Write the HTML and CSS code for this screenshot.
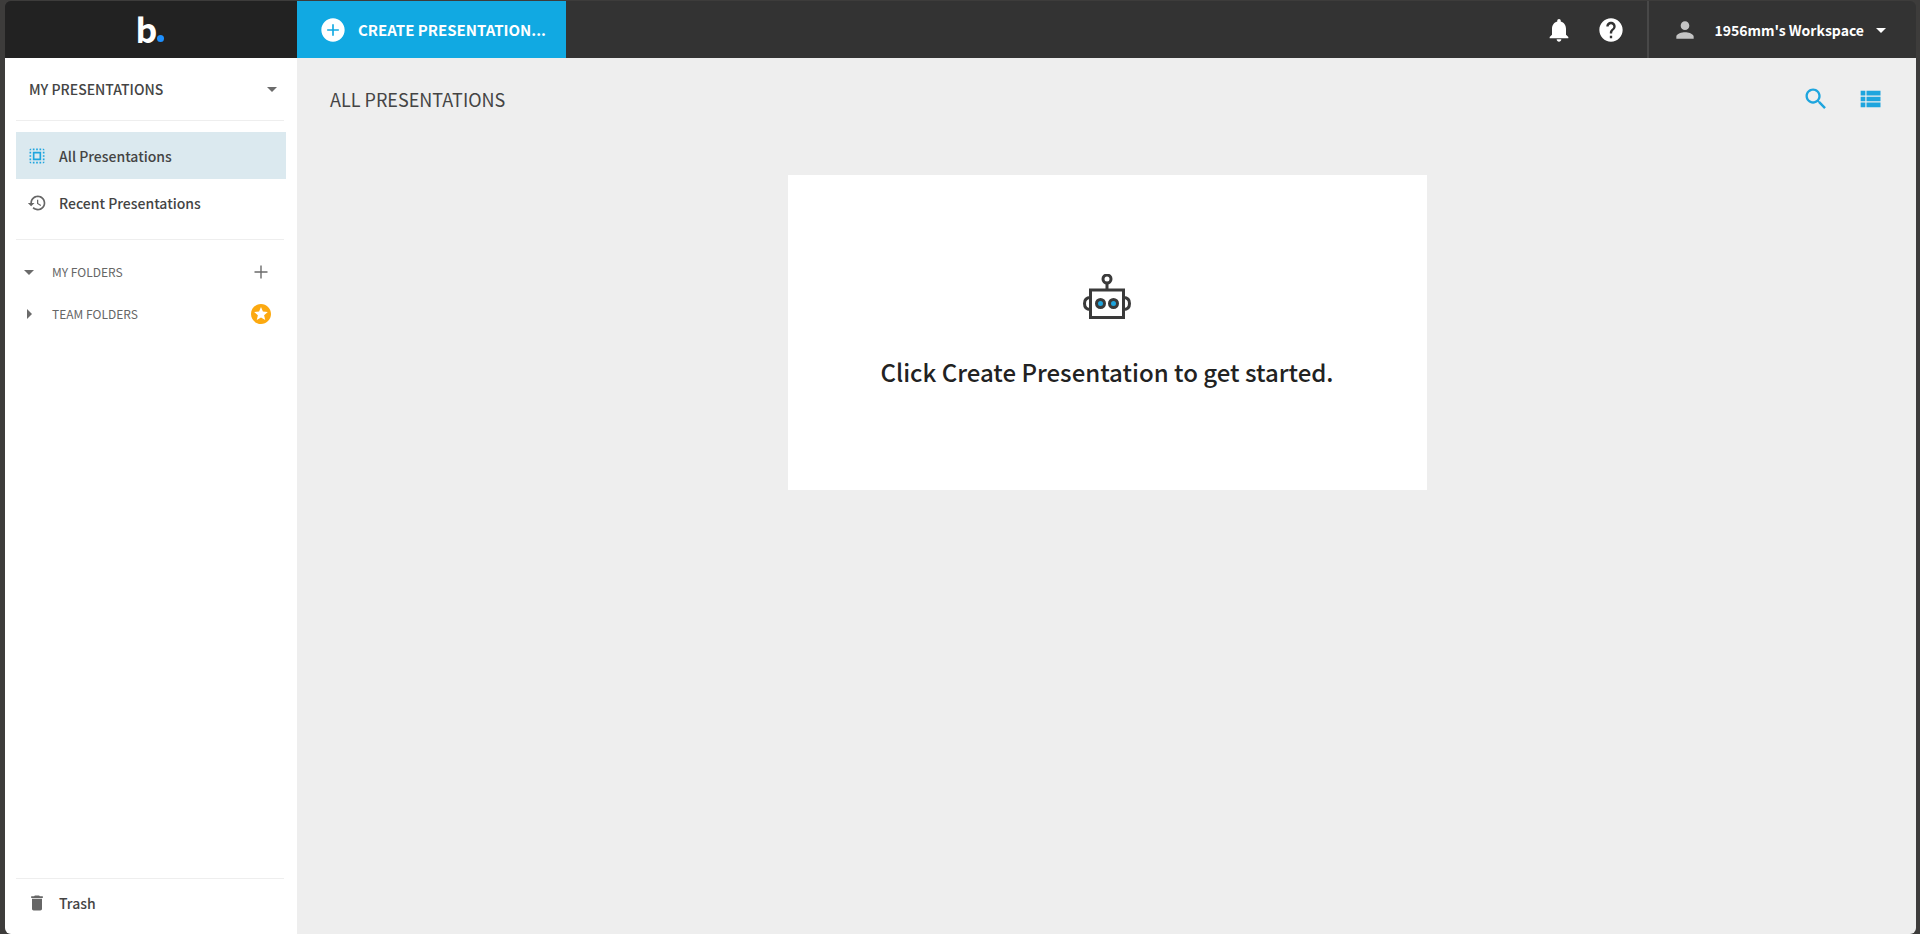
FILE: index.html
```
<!DOCTYPE html>
<html lang="en">
<head>
    <meta charset="UTF-8">
    <meta name="viewport" content="width=device-width, initial-scale=1.0">
    <title>All Presentations</title>
    <link rel="stylesheet" href="styles.css">
</head>
<body>

<div class="app">
    <header class="topbar">
        <a class="logo" href="#" aria-label="Home">b<span class="logo-dot"></span></a>
        <button class="create-btn">
            <svg class="icon-lg" viewBox="0 0 24 24"><path d="M12 2C6.48 2 2 6.48 2 12s4.48 10 10 10 10-4.480 10-10S17.520 2 12 2zm5 10.700h-4.300V17h-1.400v-4.300H7v-1.400h4.300V7h1.400v4.300H17v1.400z"/></svg>
            <span>CREATE PRESENTATION...</span>
        </button>
        <div class="topbar-actions">
            <button class="icon-btn" aria-label="Notifications">
                <svg class="icon-lg" viewBox="0 0 24 24"><path d="M12 22c1.100 0 2-.9 2-2h-4c0 1.100.9 2 2 2zm6-6v-5c0-3.070-1.640-5.640-4.500-6.320V4c0-.83-.67-1.500-1.500-1.500s-1.500.67-1.500 1.500v.68C7.630 5.360 6 7.920 6 11v5l-2 2v1h16v-1l-2-2z"/></svg>
            </button>
            <button class="icon-btn" aria-label="Help">
                <svg class="icon-lg" viewBox="0 0 24 24"><path d="M12 2C6.480 2 2 6.480 2 12s4.480 10 10 10 10-4.480 10-10S17.520 2 12 2zm1 17h-2v-2h2v2zm2.070-7.750l-.9.920C13.450 12.900 13 13.500 13 15h-2v-.5c0-1.100.45-2.100 1.170-2.830l1.240-1.260c.37-.36.59-.86.59-1.410 0-1.100-.9-2-2-2s-2 .9-2 2H8c0-2.210 1.790-4 4-4s4 1.790 4 4c0 .88-.36 1.680-.93 2.250z"/></svg>
            </button>
        </div>
        <button class="workspace">
            <svg class="person" viewBox="0 0 24 24"><path d="M12 12c2.210 0 4-1.790 4-4s-1.790-4-4-4-4 1.790-4 4 1.790 4 4 4zm0 2c-2.670 0-8 1.340-8 4v2h16v-2c0-2.660-5.330-4-8-4z"/></svg>
            <span class="workspace-name">1956mm's Workspace</span>
            <svg class="icon-md" viewBox="0 0 24 24"><path d="M7 10l5 5 5-5z"/></svg>
        </button>
    </header>

    <div class="content">
        <nav class="sidebar">
            <button class="library">
                <span>MY PRESENTATIONS</span>
                <svg class="icon-md" viewBox="0 0 24 24"><path d="M7 10l5 5 5-5z"/></svg>
            </button>

            <div class="links">
                <a class="link active" href="#">
                    <svg class="icon-sm" viewBox="0 0 24 24"><path d="M3 5h2V3c-1.100 0-2 .9-2 2zm0 8h2v-2H3v2zm4 8h2v-2H7v2zM3 9h2V7H3v2zm10-6h-2v2h2V3zm6 0v2h2c0-1.100-.9-2-2-2zM5 21v-2H3c0 1.100.9 2 2 2zm-2-4h2v-2H3v2zM9 3H7v2h2V3zm2 18h2v-2h-2v2zm8-8h2v-2h-2v2zm0 8c1.100 0 2-.9 2-2h-2v2zm0-12h2V7h-2v2zm0 8h2v-2h-2v2zm-4 4h2v-2h-2v2zm0-16h2V3h-2v2zM7 17h10V7H7v10zm2-8h6v6H9V9z"/></svg>
                    All Presentations
                </a>
                <a class="link" href="#">
                    <svg class="icon-sm" viewBox="0 0 24 24"><path d="M13 3c-4.970 0-9 4.030-9 9H1l3.890 3.890.07.14L9 12H6c0-3.870 3.130-7 7-7s7 3.130 7 7-3.130 7-7 7c-1.930 0-3.680-.79-4.940-2.060l-1.420 1.420C8.270 19.990 10.510 21 13 21c4.970 0 9-4.030 9-9s-4.030-9-9-9zm-1 5v5l4.280 2.540.72-1.210-3.500-2.080V8H12z"/></svg>
                    Recent Presentations
                </a>
            </div>

            <div class="folders">
                <div class="folder">
                    <button class="folder-toggle">
                        <svg class="icon-md" viewBox="0 0 24 24"><path d="M7 10l5 5 5-5z"/></svg>
                        MY FOLDERS
                    </button>
                    <button class="icon-btn" aria-label="Add folder">
                        <svg class="icon-md" viewBox="0 0 24 24"><path d="M18.500 12.700h-5.800v5.800h-1.400v-5.800H5.500v-1.400h5.800V5.500h1.400v5.800h5.800z"/></svg>
                    </button>
                </div>
                <div class="folder">
                    <button class="folder-toggle">
                        <svg class="icon-md" viewBox="0 0 24 24"><path d="M10 17l5-5-5-5z"/></svg>
                        TEAM FOLDERS
                    </button>
                    <button class="icon-btn star" aria-label="Upgrade">
                        <svg class="icon-md" viewBox="0 0 24 24"><path d="M11.990 2C6.470 2 2 6.480 2 12s4.470 10 9.990 10C17.520 22 22 17.520 22 12S17.520 2 11.990 2zm4.240 16L12 15.450 7.770 18l1.120-4.810-3.730-3.230 4.920-.42L12 5l1.920 4.530 4.920.42-3.730 3.230L16.230 18z"/></svg>
                    </button>
                </div>
            </div>

            <div class="trash">
                <a class="link" href="#">
                    <svg class="icon-sm" viewBox="0 0 24 24"><path d="M6 19c0 1.100.9 2 2 2h8c1.100 0 2-.9 2-2V7H6v12zM19 4h-3.500l-1-1h-5l-1 1H5v2h14V4z"/></svg>
                    Trash
                </a>
            </div>
        </nav>

        <main class="main">
            <div class="main-header">
                <h1>ALL PRESENTATIONS</h1>
                <div class="tools">
                    <button class="icon-btn" aria-label="Search">
                        <svg class="icon-lg" viewBox="0 0 24 24"><path d="M15.500 14h-.79l-.28-.27C15.410 12.590 16 11.110 16 9.500 16 5.910 13.090 3 9.500 3S3 5.910 3 9.500 5.910 16 9.500 16c1.610 0 3.090-.59 4.230-1.570l.27.28v.79l5 4.990L20.490 19l-4.990-5zm-6 0C7.010 14 5 11.990 5 9.500S7.010 5 9.500 5 14 7.010 14 9.500 11.990 14 9.500 14z"/></svg>
                    </button>
                    <button class="icon-btn" aria-label="List view">
                        <svg class="icon-lg" viewBox="0 0 24 24"><path d="M4 14h4v-4H4v4zm0 5h4v-4H4v4zM4 9h4V5H4v4zm5 5h12v-4H9v4zm0 5h12v-4H9v4zM9 5v4h12V5H9z"/></svg>
                    </button>
                </div>
            </div>

            <section class="empty-card">
                <svg class="robot" viewBox="0 0 48 46">
                    <circle cx="24" cy="5" r="4"/>
                    <path d="M24 9v7"/>
                    <path d="M7.500 23.500C3 23.500 1.500 26.500 1.500 29.500s1.500 6 6 6"/>
                    <path d="M40.500 23.500c4.500 0 6 3 6 6s-1.500 6-6 6"/>
                    <rect x="7.500" y="16" width="33" height="27.500"/>
                    <circle class="eye" cx="17.500" cy="29.500" r="4"/>
                    <circle class="eye" cx="30.500" cy="29.500" r="4"/>
                </svg>
                <h2>Click Create Presentation to get started.</h2>
            </section>
        </main>
    </div>
</div>

</body>
</html>
```
FILE: styles.css
```
* {
    box-sizing: border-box;
}

body {
    margin: 0;
    padding: 1px 4px 0 5px;
    background-color: #3d3c3b;
    font-family: 'Noto Sans CJK SC', sans-serif;
    font-size: 14px;
    font-weight: 500;
    line-height: 20px;
    color: #444;
}

button {
    padding: 0;
    border: none;
    background: none;
    color: inherit;
    font: inherit;
    cursor: pointer;
}

a {
    color: inherit;
    text-decoration: none;
}

svg {
    display: block;
    flex-shrink: 0;
    fill: currentColor;
}

.icon-sm {
    width: 20px;
    height: 20px;
}

.icon-md {
    width: 24px;
    height: 24px;
}

.icon-lg {
    width: 28px;
    height: 28px;
}

.app {
    display: flex;
    flex-direction: column;
    min-height: calc(100vh - 1px);
    border-radius: 6px;
    overflow: hidden;
}

/* Top bar */
.topbar {
    display: flex;
    height: 57px;
    background-color: #333;
    color: #fff;
}

.logo {
    display: flex;
    align-items: center;
    justify-content: center;
    width: 292px;
    padding: 0 2px 2px 0;
    background-color: #222;
    font-size: 34px;
    font-weight: 700;
}

.logo-dot {
    width: 7px;
    height: 7px;
    margin-top: 20px;
    border-radius: 50%;
    background-color: #1e90ff;
}

.create-btn {
    display: flex;
    align-items: center;
    gap: 11px;
    padding: 0 20px 0 22px;
    background-color: #11a9e2;
    font-size: 15px;
    font-weight: 700;
}

.topbar-actions {
    display: flex;
    gap: 24px;
    margin-left: auto;
    padding: 0 22px;
}

.workspace {
    display: flex;
    align-items: center;
    padding: 0 23px;
    border-left: 2px solid #484848;
}

.workspace-name {
    margin: 0 5px 0 16px;
    font-weight: 700;
}

.person {
    width: 26px;
    height: 26px;
    color: #c4c4c4;
}

/* Sidebar */
.content {
    display: flex;
    flex: 1;
}

.sidebar {
    display: flex;
    flex-direction: column;
    width: 292px;
    padding: 0 11px;
    background-color: #fff;
}

.library {
    display: flex;
    align-items: center;
    justify-content: space-between;
    height: 63px;
    margin-right: 2px;
    padding: 0 0 1px 13px;
    border-bottom: 1px solid #eee;
}

.library svg,
.folder svg {
    color: #6b6b6b;
}

.links {
    margin-right: 2px;
    padding: 11px 0 13px;
    border-bottom: 1px solid #eee;
}

.link {
    display: flex;
    align-items: center;
    gap: 12px;
    height: 47px;
    padding-left: 11px;
}

.link svg {
    color: #666;
}

.link.active {
    margin-right: -2px;
    background-color: #dbe9ef;
}

.link.active svg {
    color: #1ea5de;
}

.folders {
    padding: 11px 13px 0 1px;
    font-size: 12px;
    font-weight: 400;
    color: #666;
}

.folder {
    display: flex;
    align-items: center;
    justify-content: space-between;
    height: 42px;
}

.folder-toggle {
    display: flex;
    align-items: center;
    gap: 11px;
}

.folder .star svg {
    color: #fca910;
}

.trash {
    margin: auto 2px 8px 0;
    border-top: 1px solid #eee;
}

/* Main area */
.main {
    flex: 1;
    padding: 0 32px 0 33px;
    background-color: #eee;
}

.main-header {
    display: flex;
    align-items: center;
    justify-content: space-between;
    height: 81px;
}

h1 {
    margin: 0;
    font-size: 18px;
    font-weight: 400;
}

.tools {
    display: flex;
    gap: 26px;
    color: #1ea5de;
}

.empty-card {
    display: flex;
    flex-direction: column;
    align-items: center;
    max-width: 639px;
    margin: 36px auto 0;
    padding: 99px 20px 100px;
    background-color: #fff;
}

.robot {
    width: 48px;
    height: 46px;
    fill: none;
    stroke: #3a3a3a;
    stroke-width: 3;
}

.eye {
    fill: #1ea5de;
}

h2 {
    margin: 34px 0 0;
    font-size: 24px;
    font-weight: 500;
    line-height: 36px;
    color: #222;
}
```
